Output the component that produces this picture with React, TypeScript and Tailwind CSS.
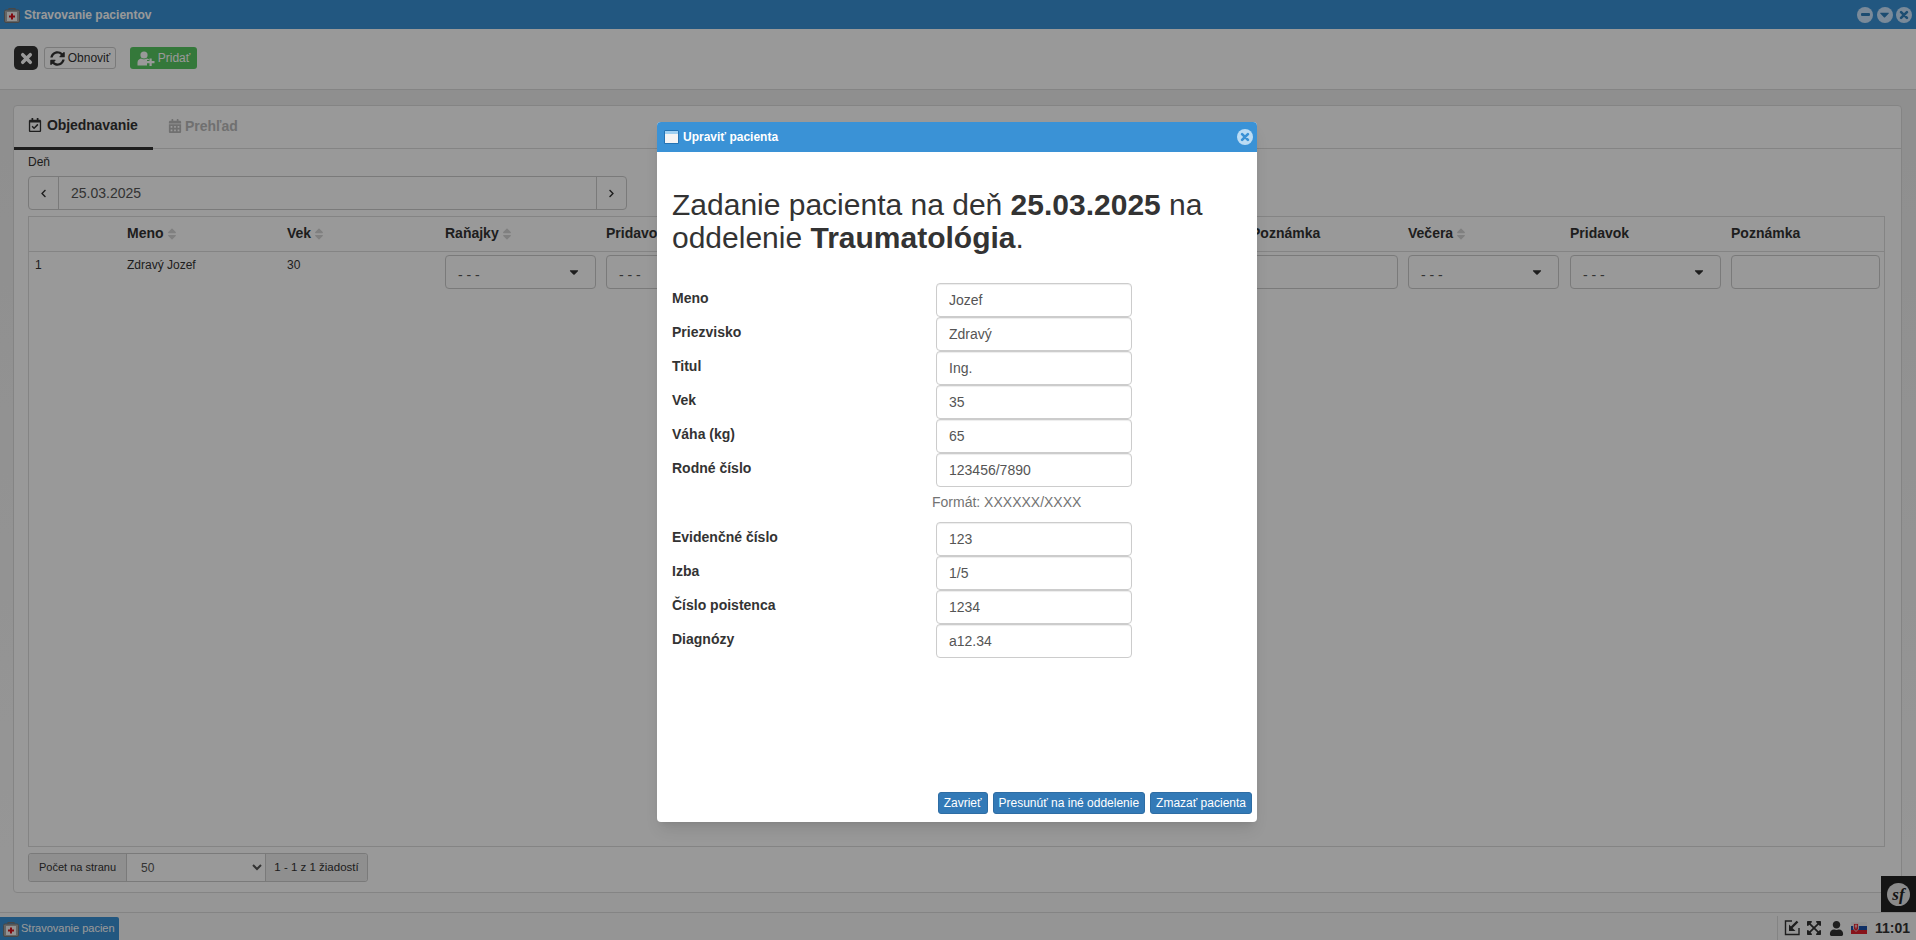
import React from 'react';
import {
  FaSyncAlt,
  FaRegCalendarCheck,
  FaCalendarAlt,
  FaSort,
  FaChevronLeft,
  FaChevronRight,
  FaExpandArrowsAlt,
  FaUser,
  FaCaretDown,
} from 'react-icons/fa';

const patientFields = [
  { label: 'Meno', value: 'Jozef' },
  { label: 'Priezvisko', value: 'Zdravý' },
  { label: 'Titul', value: 'Ing.' },
  { label: 'Vek', value: '35' },
  { label: 'Váha (kg)', value: '65' },
  { label: 'Rodné číslo', value: '123456/7890' },
];

const moreFields = [
  { label: 'Evidenčné číslo', value: '123' },
  { label: 'Izba', value: '1/5' },
  { label: 'Číslo poistenca', value: '1234' },
  { label: 'Diagnózy', value: 'a12.34' },
];

const columns = [
  { name: '', sort: false },
  { name: 'Meno', sort: true },
  { name: 'Vek', sort: true },
  { name: 'Raňajky', sort: true },
  { name: 'Pridavok', sort: false },
  { name: 'Poznámka', sort: false },
  { name: 'Obed', sort: true },
  { name: 'Pridavok', sort: false },
  { name: 'Poznámka', sort: false },
  { name: 'Večera', sort: true },
  { name: 'Pridavok', sort: false },
  { name: 'Poznámka', sort: false },
];

const gridCols =
  'grid grid-cols-[98px_160px_158px_161px_161px_161px_162px_161px_157px_162px_161px_153px]';

const FirstAidIcon = () => (
  <svg width="16" height="16" viewBox="0 0 16 16" className="shrink-0">
    <path d="M5 3V1.5h6V3" fill="none" stroke="#777" strokeWidth="1.2" />
    <rect x="0.5" y="3" width="15" height="12.5" rx="1.5" fill="#a9a9a9" stroke="#777" />
    <rect x="3" y="5" width="10" height="9" fill="#f4f4f4" />
    <path d="M7 6.5h2v2h2v2H9v2H7v-2H5v-2h2z" fill="#d8111b" />
  </svg>
);

const FatX = ({ size, color }: { size: number; color: string }) => (
  <svg width={size} height={size} viewBox="0 0 12 12">
    <path d="M2.5 2.5l7 7M9.5 2.5l-7 7" stroke={color} strokeWidth="3.2" strokeLinecap="round" />
  </svg>
);

const WinCircle = ({ children }: { children: React.ReactNode }) => (
  <span className="flex items-center justify-center w-[16px] h-[16px] rounded-full bg-[#cce6ff]">{children}</span>
);

const SelectBox = ({ className }: { className: string }) => (
  <div className={`relative h-[34px] bg-white border border-[#ccc] rounded-[4px] ${className}`}>
    <span className="absolute left-[12px] top-[9px] text-[14px] leading-[20px] text-[#555]">- - -</span>
    <FaCaretDown className="absolute right-[14px] top-[9px] text-[14px] text-[#333]" />
  </div>
);

const App: React.FC = () => {
  return (
    <div className="relative h-[940px] w-[1916px] overflow-hidden bg-white text-[#333] font-['Liberation_Sans',Arial,sans-serif]">
      {/* Hlavne okno */}
      <div className="flex flex-col h-full">
        <div className="h-[29px] bg-[#3a92d6] flex items-center pl-[4px] pr-[4px]">
          <FirstAidIcon />
          <span className="ml-[4px] text-[12px] font-bold text-white">Stravovanie pacientov</span>
          <div className="ml-auto flex items-center gap-[3.5px]">
            <WinCircle>
              <span className="block w-[9px] h-[3px] rounded-[1px] bg-[#2f7fbd]" />
            </WinCircle>
            <WinCircle>
              <FaCaretDown className="text-[15px] text-[#2f7fbd]" />
            </WinCircle>
            <WinCircle>
              <FatX size={10} color="#2f7fbd" />
            </WinCircle>
          </div>
        </div>

        <div className="h-[61px] shrink-0 bg-white border-b border-[#dcdcdc] flex items-center pl-[14px] pb-[2px]">
          <button className="w-[24px] h-[24px] bg-[#333] rounded-[5px] flex items-center justify-center">
            <FatX size={13} color="#fff" />
          </button>
          <button className="ml-[6px] h-[22px] w-[72px] border border-[#ccc] rounded-[3px] bg-white flex items-center justify-center gap-[3px] text-[12px] text-[#333]">
            <FaSyncAlt className="text-[15px]" />
            Obnoviť
          </button>
          <button className="ml-[14px] h-[22px] w-[67px] rounded-[3px] bg-[#58c862] flex items-center justify-center gap-[3px] text-[12px] text-white">
            <svg width="18" height="15" viewBox="0 0 18 15" fill="#fff">
              <circle cx="7" cy="4" r="3.6" />
              <path d="M0.5 14.5v-3C0.5 9 2.5 7.8 4 7.5 5 8.5 9 8.5 10 7.5c1 .2 2 .7 2.6 1.5H10v5.5z" />
              <path d="M12.5 7.5h2.2v2.6h2.8v2.2h-2.8V15h-2.2v-2.7H10v-2.2h2.5z" />
            </svg>
            Pridať
          </button>
        </div>

        <div className="flex-1 min-h-0 bg-linear-to-b from-[#eeeeee] to-[#fbfbfb] pt-[15px] pb-[19px] pl-[13px] pr-[14px]">
          <div className="h-full flex flex-col bg-white border border-[#dddddd] rounded-[4px]">
            <div className="h-[43px] shrink-0 flex border-b border-[#ddd]">
              <div className="w-[139px] h-[44px] border-b-[3px] border-[#333] flex items-center pl-[14px] gap-[5px] pb-[3px] text-[14px] tracking-[-0.1px] font-bold text-[#333]">
                <FaRegCalendarCheck className="text-[14px]" />
                Objednavanie
              </div>
              <div className="ml-[15px] h-[43px] flex items-center gap-[3px] pb-[3px] text-[14px] font-bold text-[#bbb]">
                <FaCalendarAlt className="text-[14px]" />
                Prehľad
              </div>
            </div>

            <div className="flex-1 min-h-0 flex flex-col pl-[14px] pr-[16px] pb-[10px]">
              <label className="block mt-[5px] h-[17px] leading-[17px] text-[12px] text-[#333]">Deň</label>
              <div className="mt-[5px] h-[34px] w-[599px] shrink-0 flex border border-[#ccc] rounded-[4px]">
                <div className="w-[30px] flex items-center justify-center border-r border-[#ccc] text-[9px] text-[#333]">
                  <FaChevronLeft />
                </div>
                <div className="flex-1 pl-[12px] leading-[32px] text-[14px] text-[#555]">25.03.2025</div>
                <div className="w-[30px] flex items-center justify-center border-l border-[#ccc] text-[9px] text-[#333]">
                  <FaChevronRight />
                </div>
              </div>

              <div className="mt-[6px] flex-1 min-h-0 border border-[#ddd]">
                <div className={`${gridCols} h-[35px] border-b border-[#ddd] items-center`}>
                  {columns.map((c, i) => (
                    <div key={i} className="flex items-center text-[14px] font-bold text-[#333] pb-[1px]">
                      {c.name}
                      {c.sort && <FaSort className="ml-[1px] text-[14px] text-[#d5d5d5]" />}
                    </div>
                  ))}
                </div>
                <div className={`${gridCols} pt-[3px] text-[12px] text-[#333]`}>
                  <div className="pl-[6px] pt-[1px]">1</div>
                  <div className="pt-[1px]">Zdravý Jozef</div>
                  <div className="pt-[1px]">30</div>
                  <SelectBox className="w-[151px]" />
                  <SelectBox className="w-[151px]" />
                  <div className="h-[34px] w-[151px] border border-[#ccc] rounded-[4px]" />
                  <SelectBox className="w-[151px]" />
                  <SelectBox className="w-[151px]" />
                  <div className="h-[34px] w-[147px] border border-[#ccc] rounded-[4px]" />
                  <SelectBox className="w-[151px]" />
                  <SelectBox className="w-[151px]" />
                  <div className="h-[34px] w-[149px] border border-[#ccc] rounded-[4px]" />
                </div>
              </div>

              <div className="mt-[6px] h-[29px] w-[340px] shrink-0 flex text-[#333] border border-[#ccc] rounded-[3px]">
                <div className="w-[98px] bg-[#eee] border-r border-[#ccc] flex items-center justify-center rounded-l-[3px] text-[11px]">
                  Počet na stranu
                </div>
                <select className="w-[138px] bg-white pl-[10px] text-[12px] text-[#555] outline-none" defaultValue="50">
                  <option>50</option>
                </select>
                <div className="flex-1 bg-[#eee] border-l border-[#ccc] flex items-center justify-center rounded-r-[3px] text-[11.5px]">
                  1 - 1 z 1 žiadostí
                </div>
              </div>
            </div>
          </div>
        </div>

        <div className="h-[28px] shrink-0 bg-[#f8f8f8] border-t border-[#ddd] flex items-end">
          <div className="h-[23px] w-[119px] bg-[#3a92d6] rounded-tr-[2px] flex items-center pl-[3px] overflow-hidden">
            <FirstAidIcon />
            <span className="ml-[2px] text-[11px] text-white whitespace-nowrap">Stravovanie pacien</span>
          </div>
          <div className="ml-auto h-[24px] flex items-center border-l border-[#ddd] pl-[6px] pr-[6px]">
            <svg width="16" height="16" viewBox="0 0 16 16" fill="none" stroke="#333" strokeWidth="1.4">
              <path d="M8 1H1.5v13.5H15V8" />
              <path d="M13.5 1.5L7 8" strokeWidth="2.4" />
              <path d="M5 4.5V11h6.5z" fill="#333" stroke="none" />
            </svg>
            <FaExpandArrowsAlt className="ml-[6px] text-[16px] text-[#333]" />
            <FaUser className="ml-[7px] text-[15px] text-[#333]" />
            <svg width="16" height="12" viewBox="0 0 16 12" className="ml-[7px]">
              <rect width="16" height="4" fill="#eee" />
              <rect y="4" width="16" height="4" fill="#1a4fa8" />
              <rect y="8" width="16" height="4" fill="#e2202c" />
              <path d="M2.5 1.5h5v5.5L5 9.5 2.5 7z" fill="#e2202c" stroke="#fff" strokeWidth="0.7" />
              <path d="M5 2.5v4M3.8 4h2.4" stroke="#fff" strokeWidth="0.8" />
            </svg>
            <span className="ml-[8px] text-[14px] font-bold text-[#333]">11:01</span>
          </div>
        </div>
      </div>

      {/* Symfony toolbar */}
      <div className="absolute right-0 top-[876px] w-[35px] h-[36px] bg-[#222] flex items-center justify-center">
        <span className="w-[23px] h-[23px] rounded-full bg-[#e8e8e8] flex items-center justify-center font-['Liberation_Serif',serif] italic font-bold text-[17px] leading-none text-[#222]">
          sf
        </span>
      </div>

      {/* Prekrytie a modalne okno */}
      <div className="absolute inset-0 bg-[rgba(0,0,0,0.4)]" />
      <div className="absolute left-[657px] top-[122px] w-[600px] h-[700px] bg-white rounded-[4px] shadow-lg flex flex-col overflow-hidden">
        <div className="h-[30px] shrink-0 bg-[#3a92d6] flex items-center pl-[7px] pr-[4px]">
          <svg width="15" height="14" viewBox="0 0 15 14" className="shrink-0">
            <rect x="0" y="0" width="15" height="14" rx="1.5" fill="#2473b3" />
            <rect x="1" y="1" width="13" height="3" fill="#9fd0f2" />
            <rect x="1" y="4" width="13" height="9" fill="#f4f4f4" />
          </svg>
          <span className="ml-[4px] text-[12px] font-bold text-white">Upraviť pacienta</span>
          <span className="ml-auto flex items-center justify-center w-[16px] h-[16px] rounded-full bg-[#bbdcf4]">
            <FatX size={10} color="#3a92d6" />
          </span>
        </div>

        <div className="flex-1 min-h-0 flex flex-col px-[15px]">
          <h3 className="mt-[36px] text-[30px] leading-[33px] font-normal text-[#333]">
            Zadanie pacienta na deň <b>25.03.2025</b> na oddelenie <b>Traumatológia</b>.
          </h3>

          <div className="mt-[29px]">
            {patientFields.map(f => (
              <div key={f.label} className="flex h-[34px]">
                <label className="w-[264px] pt-[5px] text-[14px] leading-[20px] font-bold text-[#333]">{f.label}</label>
                <input
                  readOnly
                  value={f.value}
                  className="w-[196px] h-[34px] px-[12px] border border-[#ccc] rounded-[4px] text-[14px] text-[#555] shadow-[inset_0_1px_1px_rgba(0,0,0,0.075)]"
                />
              </div>
            ))}
            <p className="ml-[260px] mt-[5px] mb-[10px] text-[14px] leading-[20px] text-[#737373]">Formát: XXXXXX/XXXX</p>
            {moreFields.map(f => (
              <div key={f.label} className="flex h-[34px]">
                <label className="w-[264px] pt-[5px] text-[14px] leading-[20px] font-bold text-[#333]">{f.label}</label>
                <input
                  readOnly
                  value={f.value}
                  className="w-[196px] h-[34px] px-[12px] border border-[#ccc] rounded-[4px] text-[14px] text-[#555] shadow-[inset_0_1px_1px_rgba(0,0,0,0.075)]"
                />
              </div>
            ))}
          </div>
        </div>

        <div className="flex justify-end gap-[5px] pr-[5px] pb-[8px]">
          <button className="h-[22px] px-[5px] bg-[#337ab7] border border-[#2e6da4] rounded-[3px] text-[12px] text-white">Zavrieť</button>
          <button className="h-[22px] px-[5px] bg-[#337ab7] border border-[#2e6da4] rounded-[3px] text-[12px] text-white">Presunúť na iné oddelenie</button>
          <button className="h-[22px] px-[5px] bg-[#337ab7] border border-[#2e6da4] rounded-[3px] text-[12px] text-white">Zmazať pacienta</button>
        </div>
      </div>
    </div>
  );
};

export default App;
